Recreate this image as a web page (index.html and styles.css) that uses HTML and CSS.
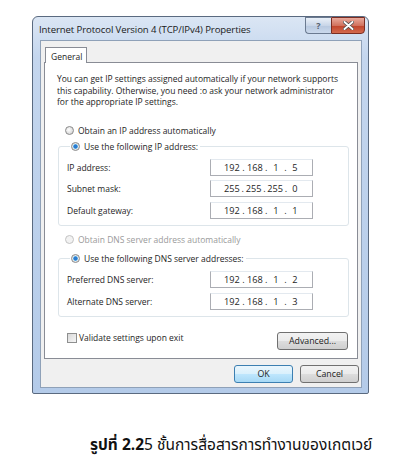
FILE: index.html
```html
<!DOCTYPE html>
<html>
<head>
<meta charset="utf-8">
<link rel="stylesheet" href="styles.css">
</head>
<body>
<div class="page">
  <div class="window">
    <div class="titlebar">
      <span class="title">Internet Protocol Version 4 (TCP/IPv4) Properties</span>
      <div class="caption-btns">
        <div class="cbtn help">?</div>
        <div class="cbtn close">
          <svg width="11" height="9" viewBox="0 0 11 9"><path d="M1.5 1 L9.5 8 M9.5 1 L1.5 8" stroke="#4a4a4a" stroke-width="3.4" stroke-linecap="round"/><path d="M1.5 1 L9.5 8 M9.5 1 L1.5 8" stroke="#ffffff" stroke-width="1.9" stroke-linecap="round"/></svg>
        </div>
      </div>
    </div>
    <div class="client">
      <div class="tabs"><div class="tab">General</div></div>
      <div class="panel">
        <p class="desc">You can get IP settings assigned automatically if your network supports this capability. Otherwise, you need :o ask your network administrator for the appropriate IP settings.</p>
        <div class="opt first"><span class="radio"></span><span>Obtain an IP address automatically</span></div>
        <fieldset class="group g1">
          <legend><span class="radio on"></span><span>Use the following IP address:</span></legend>
          <div class="row"><span class="lbl">IP address:</span><div class="ip"><span>192</span>.<span>168</span>.<span>1</span>.<span>5</span></div></div>
          <div class="row"><span class="lbl">Subnet mask:</span><div class="ip"><span>255</span>.<span>255</span>.<span>255</span>.<span>0</span></div></div>
          <div class="row"><span class="lbl">Default gateway:</span><div class="ip"><span>192</span>.<span>168</span>.<span>1</span>.<span>1</span></div></div>
        </fieldset>
        <div class="opt dis"><span class="radio dim"></span><span>Obtain DNS server address automatically</span></div>
        <fieldset class="group g2">
          <legend><span class="radio on"></span><span>Use the following DNS server addresses:</span></legend>
          <div class="row"><span class="lbl">Preferred DNS server:</span><div class="ip"><span>192</span>.<span>168</span>.<span>1</span>.<span>2</span></div></div>
          <div class="row"><span class="lbl">Alternate DNS server:</span><div class="ip"><span>192</span>.<span>168</span>.<span>1</span>.<span>3</span></div></div>
        </fieldset>
        <div class="bottomrow">
          <div class="check"><span class="box"></span><span>Validate settings upon exit</span></div>
          <div class="btn adv">Advanced...</div>
        </div>
      </div>
      <div class="buttons">
        <div class="btn ok">OK</div>
        <div class="btn">Cancel</div>
      </div>
    </div>
  </div>
  <p class="fig"><b>รูปที่ 2.2</b>5 ชั้นการสื่อสารการทำงานของเกตเวย์</p>
</div>
</body>
</html>
```
FILE: styles.css
```css
html, body { margin: 0; background: #fff; }
body { font-family: "Open Sans", "Noto Sans", sans-serif; font-size: 8.5px; color: #1e1e1e; }
.page { padding: 16px 0 0 32px; }
.window {
  width: 335px; height: 376px;
  border: 1px solid #5a6a80; border-radius: 6px 6px 2px 2px;
  background: linear-gradient(180deg, #dbe6f4 0px, #c4d6ee 40px, #b4cbe9 100%);
  box-sizing: content-box; display: flex; flex-direction: column;
}
.titlebar { height: 23px; display: flex; align-items: flex-start; padding-left: 6px; }
.title { font-size: 9.6px; color: #1a1a1a; margin-top: 6px; letter-spacing: -0.1px; }
.caption-btns { margin-left: auto; margin-right: 3px; display: flex; }
.cbtn { height: 17px; border: 1px solid #6b7a90; box-sizing: border-box; display: flex; align-items: center; justify-content: center; }
.help { width: 26px; border-radius: 0 0 0 4px; border-right: none; background: linear-gradient(180deg, #eaf0f8, #c9d6e8 50%, #b7c8df 51%, #cbd9ec); color: #55606e; font-size: 9px; font-weight: bold; }
.close { width: 34px; border-radius: 0 0 4px 0; border-color: #7a2d22; background: linear-gradient(180deg, #e9a99b, #d1735f 50%, #c0432a 51%, #d36a4e); }
.client {
  flex: 1; margin: 0 6px 5px 7px; background: #f0f0f0;
  border: 1px solid #8fa1b8; display: flex; flex-direction: column;
}
.tabs { padding: 6px 0 0 4px; display: flex; }
.tab {
  width: 42px; height: 16px; box-sizing: border-box; border: 1px solid #898c95; border-bottom: none;
  background: #fff; padding: 3px 0 0 5px; margin-bottom: -1px; position: relative; z-index: 1;
}
.panel {
  margin: 0 3px 0 3px; height: 297px; box-sizing: border-box; background: #fff;
  border: 1px solid #898c95; padding: 0 9px 0 12px;
}
.desc { margin: 10px 0 0; line-height: 11.5px; width: 285px; }
.opt, legend, .check { display: flex; align-items: center; gap: 4px; line-height: 12px; }
.opt { padding-left: 8px; }
.opt.first { margin-top: 17px; }
.opt.dis { margin-top: 8px; color: #9a9a9a; }
.radio {
  width: 9px; height: 9px; border-radius: 50%; box-sizing: border-box; border: 1px solid #8a8a8a;
  background: radial-gradient(circle at 40% 40%, #ffffff, #d9d9d9 70%);
}
.radio.on { background: radial-gradient(circle, #2b7bcf 0 1.8px, #8fd0f5 2.3px, #e6e6e6 2.8px); }
.radio.dim { border-color: #c3c3c3; background: #f2f2f2; }
.group {
  margin: 4px 0 0 1px; width: 291px; box-sizing: border-box; padding: 6px 0 6px 8px;
  border: 1px solid #dde5ea; border-radius: 3px; min-width: 0;
}
.g2 { margin-top: 7px; }
legend { padding: 0 2px 0 1px; margin-left: 3px; height: 12px; }
.row { display: flex; align-items: center; height: 17px; }
.row + .row { margin-top: 4.5px; }
.g2 .row + .row { margin-top: 5px; }
.lbl { width: 143px; }
.ip {
  width: 103px; height: 17px; box-sizing: border-box; border: 1px solid #abadb3; border-top-color: #e3e9ef;
  display: flex; align-items: center; justify-content: space-between; padding: 0 11px 0 13px; font-size: 9.2px;
}
.ip span { min-width: 12px; text-align: center; }
.bottomrow { display: flex; align-items: flex-start; margin-top: 15px; padding-left: 10px; }
.check { gap: 2px; margin-top: 0px; }
.box { width: 10px; height: 10px; box-sizing: border-box; border: 1px solid #8e8f8f; background: linear-gradient(135deg, #d9d9d9, #f6f6f6); }
.btn {
  height: 18px; width: 59px; box-sizing: border-box; border: 1px solid #707070; border-radius: 3px;
  background: linear-gradient(180deg, #f2f2f2 0, #ebebeb 50%, #dddddd 51%, #cfcfcf 100%);
  display: flex; align-items: center; justify-content: center; font-size: 8.8px;
}
.adv { width: 71px; margin-left: auto; margin-right: 0px; }
.buttons { display: flex; justify-content: flex-end; gap: 7px; margin: 6px 2px 0 0; }
.ok { border-color: #3c7fb1; background: linear-gradient(180deg, #eaf6fd 0, #d9f0fc 50%, #bee6fd 51%, #a7d9f5 100%); }
.fig { margin: 40px 0 0 58px; font-family: "Noto Sans Thai", "Noto Sans", "DejaVu Sans", sans-serif; font-size: 15.5px; color: #111; }
.fig b { font-weight: bold; }
```
